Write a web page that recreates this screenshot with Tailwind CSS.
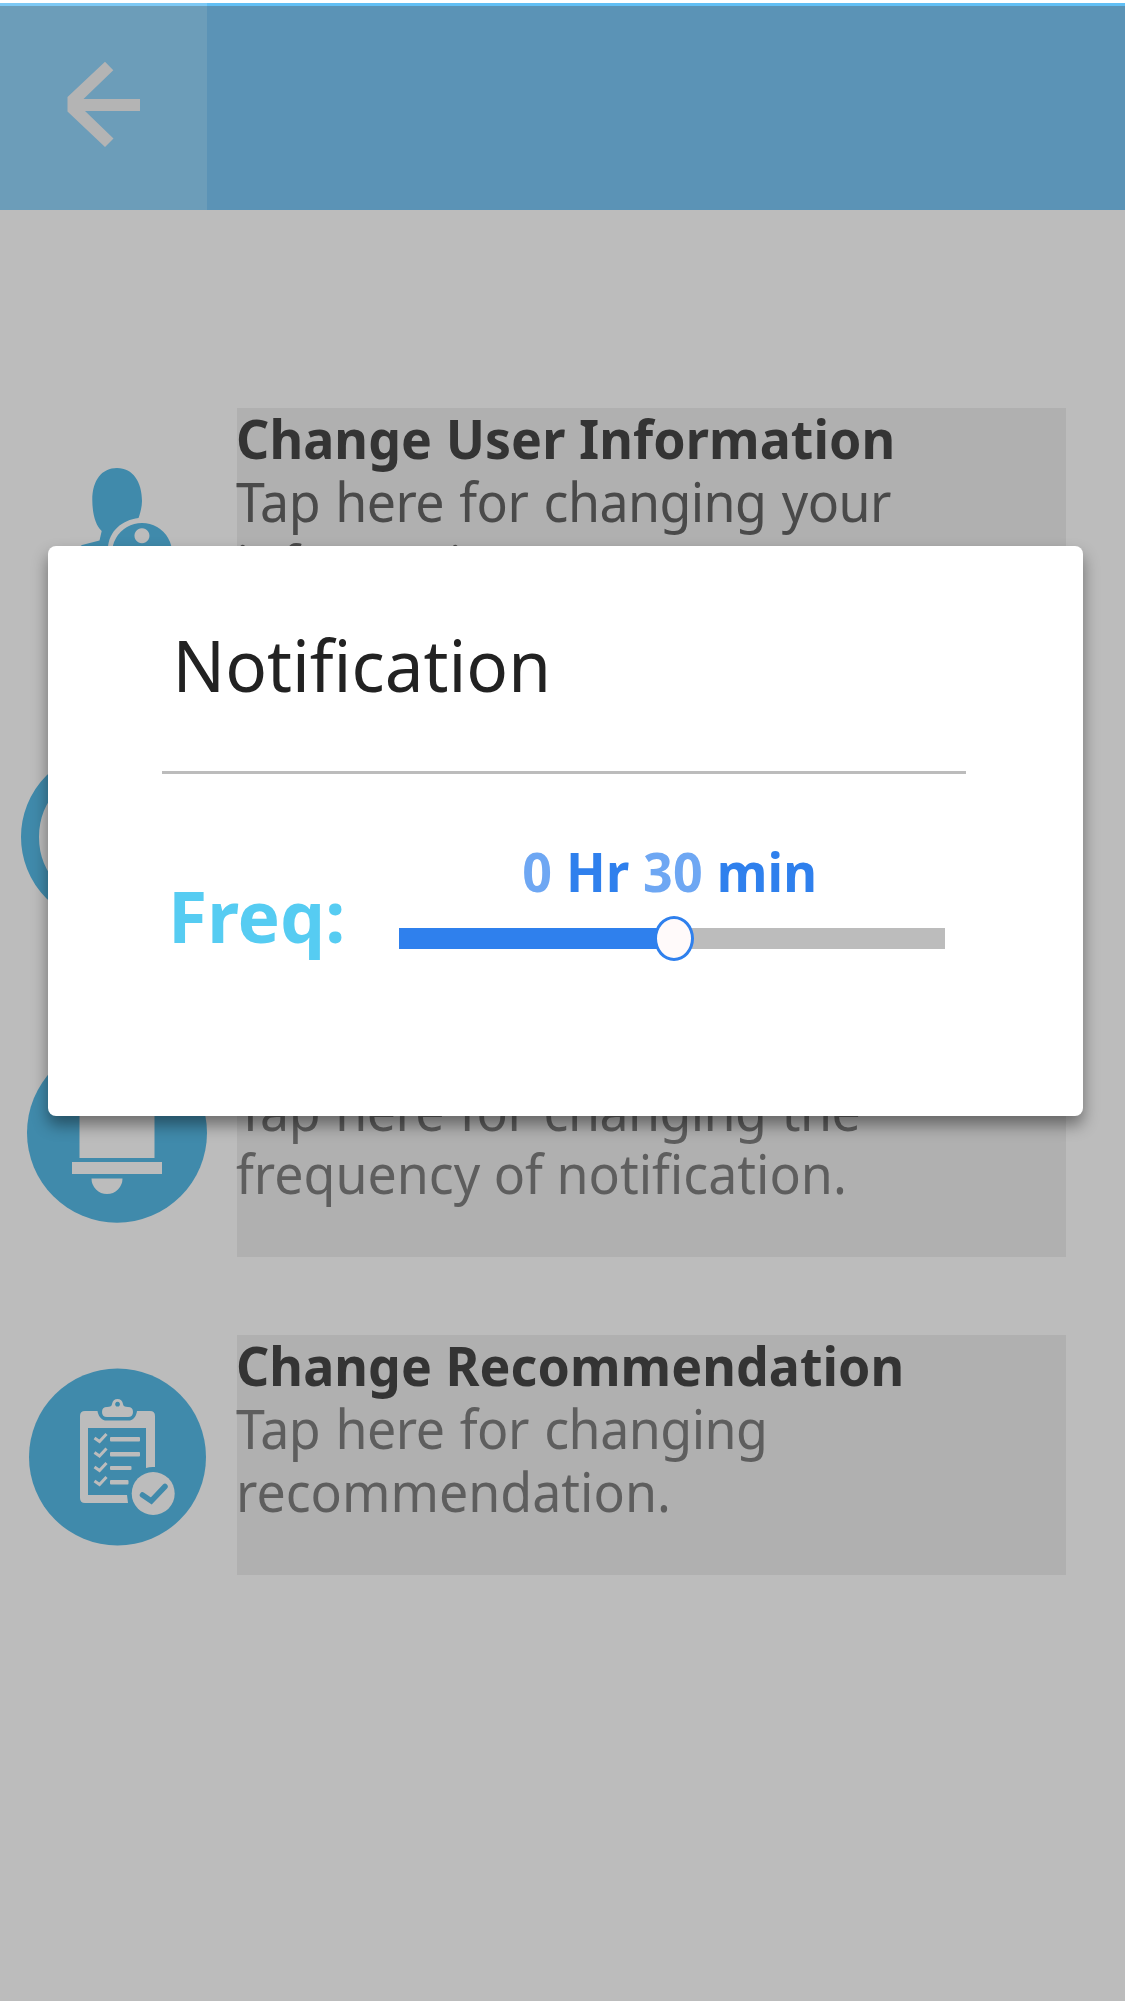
<!DOCTYPE html>
<html lang="en">
<head>
<meta charset="utf-8">
<title>Notification settings</title>
<script src="https://cdn.jsdelivr.net/npm/@tailwindcss/browser@4"></script>
</head>
<body class="relative flex h-[2004px] w-[1125px] flex-col overflow-hidden border-y-3 border-white bg-[#bcbcbc] font-['Noto_Sans',sans-serif]">
  <header class="flex h-[207px] shrink-0 border-t-3 border-[#61bff5] bg-[#5b93b6]">
    <button class="-mt-[3px] flex h-[207px] w-[207px] border-t-3 border-[#7dc9f5] bg-[#6c9db9]" aria-label="Back">
      <svg class="h-[204px] w-[207px]" viewBox="0 6 207 204" fill="#b4b4b4">
        <path d="M105 61.700L113.300 70.300L83.500 99H140V111H85L113.500 138.500L105 147L67.500 111.500V97Z"/>
      </svg>
    </button>
  </header>

  <main class="flex flex-col pt-[198px] text-[54px] leading-[63px] text-[#5e5e5e]">
    <section class="flex h-[240px]">
      <svg class="h-[240px] w-[237px] shrink-0" viewBox="0 408 237 240" fill="#408aab">
        <path d="M117 468C133 468 142 482 142 501C142 507 140 514 138.500 518C122 520 109 531 108 548H78L82 545L99.500 540.500L101.700 531C95 525 92.300 512 92.300 500C92.300 480 102 468 117 468Z"/>
        <path fill-rule="evenodd" d="M142 523a30 30 0 1 0 .1 0ZM142 528.300a7.500 7.500 0 1 1-.1 0Z"/>
      </svg>
      <div class="w-[829px] bg-[#b0b0b0] text-[#4a4a4a]">
        <div class="-mt-[1.500px] -ml-px flex origin-left scale-x-[0.961] flex-col whitespace-nowrap">
          <h2 class="font-bold tracking-[0.08px] text-[#343434]">Change User Information</h2>
          <p><span class="tracking-[-0.6px] [word-spacing:2.5px]">Tap here for changing your</span><br>information.</p>
        </div>
      </div>
    </section>

    <section class="mt-[64px] flex h-[241px]">
      <svg class="h-[241px] w-[237px] shrink-0" viewBox="0 712 237 241" fill="none">
        <circle cx="108" cy="837" r="78" stroke="#408aab" stroke-width="18"/>
      </svg>
      <div class="w-[829px] bg-[#b0b0b0]"></div>
    </section>

    <section class="mt-[64px] flex h-[240px]">
      <svg class="h-[240px] w-[237px] shrink-0" viewBox="0 1017 237 240" fill="#bcbcbc">
        <circle cx="117" cy="1132.700" r="90" fill="#408aab"/>
        <path d="M79.500 1158V1115A37.500 37.500 0 0 1 154.500 1115V1158ZM72 1162H162V1174H72ZM91.500 1178.500H122.500A15.500 15.500 0 0 1 91.500 1178.500Z"/>
      </svg>
      <div class="w-[829px] bg-[#b0b0b0]">
        <div class="-mt-[1.500px] -ml-px flex origin-left scale-x-[0.961] flex-col whitespace-nowrap">
          <h2 class="font-bold text-[#343434]">Notification</h2>
          <p><span class="tracking-[-0.6px] [word-spacing:2.5px]">Tap here for changing the</span><br>frequency of notification.</p>
        </div>
      </div>
    </section>

    <section class="mt-[78px] flex h-[240px]">
      <svg class="h-[240px] w-[237px] shrink-0" viewBox="0 1335 237 240" fill="#bcbcbc">
        <circle cx="117.500" cy="1457" r="88.500" fill="#408aab"/>
        <path fill-rule="evenodd" d="M85 1411H97.500C98 1415 101 1420 105 1420.500H130C134 1420 136.500 1415 137 1411H150Q155 1411 155 1416V1467Q150 1466.500 146 1468V1428H88V1495H127L128 1503H85Q80 1503 80 1498V1416Q80 1411 85 1411Z"/>
        <path fill-rule="evenodd" d="M107 1417Q102 1417 102 1412Q102 1407 107 1407Q112 1407 112 1404Q113 1399 117.500 1399Q122 1399 123 1404Q123 1407 128 1407Q133 1407 133 1412Q133 1417 128 1417ZM117.500 1401.800a2.400 2.400 0 1 0 .1 0Z"/>
        <g fill="none" stroke="#bcbcbc" stroke-width="3" stroke-linejoin="miter">
          <path id="tick" d="M94.500 1438L99.500 1441.500L106.500 1434"/>
          <use href="#tick" y="14.500"/><use href="#tick" y="29"/><use href="#tick" y="43"/>
        </g>
        <rect x="110" y="1437" width="30" height="4.500" rx="1"/>
        <rect x="110" y="1452" width="30" height="4.500" rx="1"/>
        <rect x="110" y="1466" width="21.500" height="4" rx="1"/>
        <rect x="110" y="1480" width="18.500" height="4.500" rx="1"/>
        <circle cx="153.200" cy="1493.500" r="21.500"/>
        <path d="M142.500 1495L151.300 1501L165 1486.500" fill="none" stroke="#408aab" stroke-width="5.500" stroke-linecap="round"/>
      </svg>
      <div class="w-[829px] bg-[#b0b0b0]">
        <div class="-mt-[1.500px] -ml-px flex origin-left scale-x-[0.961] flex-col whitespace-nowrap">
          <h2 class="font-bold tracking-[0.05px] text-[#343434]">Change Recommendation</h2>
          <p><span class="tracking-[-0.55px] [word-spacing:2.5px]">Tap here for changing</span><br>recommendation.</p>
        </div>
      </div>
    </section>
  </main>

  <!-- Dialog over the settings list -->
  <div role="dialog" class="absolute top-[543px] left-[48px] flex h-[570px] w-[1035px] flex-col rounded-lg bg-white px-[114px] shadow-[0_9px_16px_rgba(0,0,0,0.42)]">
    <h1 class="flex h-[225px] origin-left scale-x-[0.961] items-end pb-[58px] pl-[11px] text-[72px] leading-[98px] text-[#222222]">Notification</h1>
    <hr class="h-[3px] w-[804px] border-0 bg-[#bcbcbc]">
    <div class="flex">
      <div class="w-[237px] pt-[92px] pl-[6px] text-[72px] leading-[98px] font-bold text-[#56ccf2]">
        <span class="inline-block origin-left scale-x-[0.99]">Freq:</span>
      </div>
      <div class="flex w-[546px] flex-col pt-[66px]">
        <div class="flex origin-left scale-x-[0.963] pl-[128px] text-[54px] leading-[63px] font-bold tracking-[0.2px] whitespace-pre text-[#2f80ed]"><span class="text-[#6ea7f3]">0</span> Hr <span class="text-[#6ea7f3]">30</span> min</div>
        <div class="mt-[12px] flex h-[46px] items-center">
          <div class="h-[21px] w-[270px] shrink-0 bg-[#2f80ed]"></div>
          <div class="z-10 -mr-[18px] -ml-[15px] h-[45px] w-[40px] shrink-0 rounded-[50%] border-3 border-[#2f80ed] bg-[#fffafa]"></div>
          <div class="h-[21px] grow bg-[#bcbcbc]"></div>
        </div>
      </div>
    </div>
  </div>
</body>
</html>
